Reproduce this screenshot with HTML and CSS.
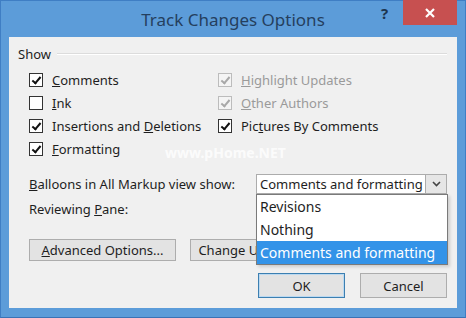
FILE: index.html
```html
<!DOCTYPE html>
<html lang="en">
<head>
    <meta charset="UTF-8">
    <title>Track Changes Options</title>
    <link rel="stylesheet" href="styles.css">
</head>
<body>
    <div class="window">
        <div class="titlebar">
            <div class="title">Track Changes Options</div>
            <div class="help">?</div>
            <div class="close">
                <svg width="12" height="12" viewBox="0 0 12 12"><path d="M2 2 L10 10 M10 2 L2 10" stroke="#fff" stroke-width="2.2"/></svg>
            </div>
        </div>

        <div class="panel">
            <div class="group-head">
                <span>Show</span>
                <div class="rule"></div>
            </div>

            <div class="options">
                <label class="opt"><span class="box checked"></span><span><u>C</u>omments</span></label>
                <label class="opt off"><span class="box checked"></span><span><u>H</u>ighlight Updates</span></label>
                <label class="opt"><span class="box"></span><span><u>I</u>nk</span></label>
                <label class="opt off"><span class="box checked"></span><span><u>O</u>ther Authors</span></label>
                <label class="opt"><span class="box checked"></span><span>Insertions and <u>D</u>eletions</span></label>
                <label class="opt"><span class="box checked"></span><span>Pic<u>t</u>ures By Comments</span></label>
                <label class="opt"><span class="box checked"></span><span><u>F</u>ormatting</span></label>
            </div>

            <div class="field-row first">
                <span><u>B</u>alloons in All Markup view show:</span>
                <div class="combo">
                    <span class="combo-value">Comments and formatting</span>
                    <span class="combo-arrow">
                        <svg width="9" height="6" viewBox="0 0 9 6"><path d="M1 1 L4.5 4.5 L8 1" fill="none" stroke="#444" stroke-width="1.6"/></svg>
                    </span>
                </div>
            </div>
            <div class="field-row">
                <span>Reviewing <u>P</u>ane:</span>
            </div>

            <div class="button-row">
                <button class="btn wide"><u>A</u>dvanced Options...</button>
                <button class="btn change">Change User Name...</button>
            </div>

            <div class="action-row">
                <button class="btn action default">OK</button>
                <button class="btn action">Cancel</button>
            </div>

            <div class="watermark">www.pHome.NET</div>

            <ul class="dropdown">
                <li>Revisions</li>
                <li>Nothing</li>
                <li class="selected">Comments and formatting</li>
            </ul>
        </div>
    </div>
</body>
</html>
```

FILE: styles.css
```css
body {
    margin: 0;
    font-family: "Noto Sans", "Open Sans", sans-serif;
    font-size: 13px;
    color: #1e1e1e;
}
.window {
    width: 466px;
    height: 318px;
    box-sizing: border-box;
    background: #5c9cd9;
    border: 1px solid #3f7ec4;
    border-bottom-color: #3a72b5;
}
.titlebar {
    position: relative;
    height: 36px;
}
.title {
    text-align: center;
    font-size: 17px;
    line-height: 38px;
    color: #253f5e;
}
.help {
    position: absolute;
    left: 380px;
    top: 2px;
    font-weight: bold;
    font-size: 15px;
    color: #1c3550;
}
.close {
    position: absolute;
    left: 402px;
    top: -1px;
    width: 54px;
    height: 25px;
    background: #c75050;
    display: flex;
    align-items: center;
    justify-content: center;
}
.panel {
    position: relative;
    margin: 0 8px;
    height: 271px;
    box-sizing: border-box;
    background: #f0f0f0;
    padding: 8px 10px 0 9px;
}
.group-head {
    display: flex;
    align-items: center;
    height: 18px;
    gap: 6px;
}
.rule {
    flex: 1;
    height: 1px;
    background: #dcdcdc;
    border-bottom: 1px solid #fff;
}
.options {
    display: grid;
    grid-template-columns: 189px 1fr;
    grid-auto-rows: 23px;
    margin: 5px 0 0 11px;
}
.opt {
    display: flex;
    align-items: center;
    gap: 9px;
}
.opt.off {
    color: #9a9a9a;
}
.box {
    width: 14px;
    height: 14px;
    box-sizing: border-box;
    border: 1px solid #333;
    background: #fff;
    position: relative;
}
.off .box {
    border-color: #bcbcbc;
    background: #f4f4f4;
}
.box.checked::after {
    content: "";
    position: absolute;
    left: 4px;
    top: 1px;
    width: 3px;
    height: 7px;
    border: solid #111;
    border-width: 0 2px 2px 0;
    transform: rotate(40deg);
}
.off .box.checked::after {
    border-color: #a8a8a8;
}
.field-row {
    display: grid;
    grid-template-columns: 227px 1fr;
    align-items: center;
    height: 20px;
    margin: 5px 0 0 11px;
}
.field-row.first {
    margin-top: 14px;
}
.combo {
    display: flex;
    height: 20px;
    box-sizing: border-box;
    border: 1px solid #acacac;
    background: #fff;
}
.combo-value {
    flex: 1;
    padding-left: 3px;
    line-height: 18px;
}
.combo-arrow {
    width: 20px;
    background: #e6e6e6;
    border-left: 1px solid #acacac;
    display: flex;
    align-items: center;
    justify-content: center;
}
.button-row {
    display: flex;
    gap: 14px;
    margin: 20px 0 0 11px;
}
.btn {
    font: inherit;
    color: #1e1e1e;
    height: 22px;
    padding: 0;
    background: #e3e3e3;
    border: 1px solid #adadad;
}
.btn.wide {
    width: 147px;
}
.btn.change {
    width: 146px;
}
.action-row {
    display: flex;
    justify-content: flex-end;
    gap: 15px;
    margin-top: 12px;
}
.btn.action {
    width: 87px;
    height: 25px;
}
.btn.default {
    border-color: #3c7fb1;
    box-shadow: inset 0 0 0 1px #bcd9f0;
}
.watermark {
    position: absolute;
    left: 156px;
    top: 106px;
    font-size: 14px;
    font-weight: bold;
    color: rgba(255, 255, 255, 0.8);
}
.dropdown {
    position: absolute;
    left: 247px;
    top: 157px;
    width: 192px;
    margin: 0;
    padding: 0;
    list-style: none;
    background: #fff;
    border: 1px solid #7a7a7a;
    box-sizing: border-box;
    font-size: 14px;
    box-shadow: 2px 2px 3px rgba(0, 0, 0, 0.15);
}
.dropdown li {
    height: 23px;
    line-height: 23px;
    padding-left: 3px;
}
.dropdown li.selected {
    background: #3393e8;
    color: #fff;
}
```
